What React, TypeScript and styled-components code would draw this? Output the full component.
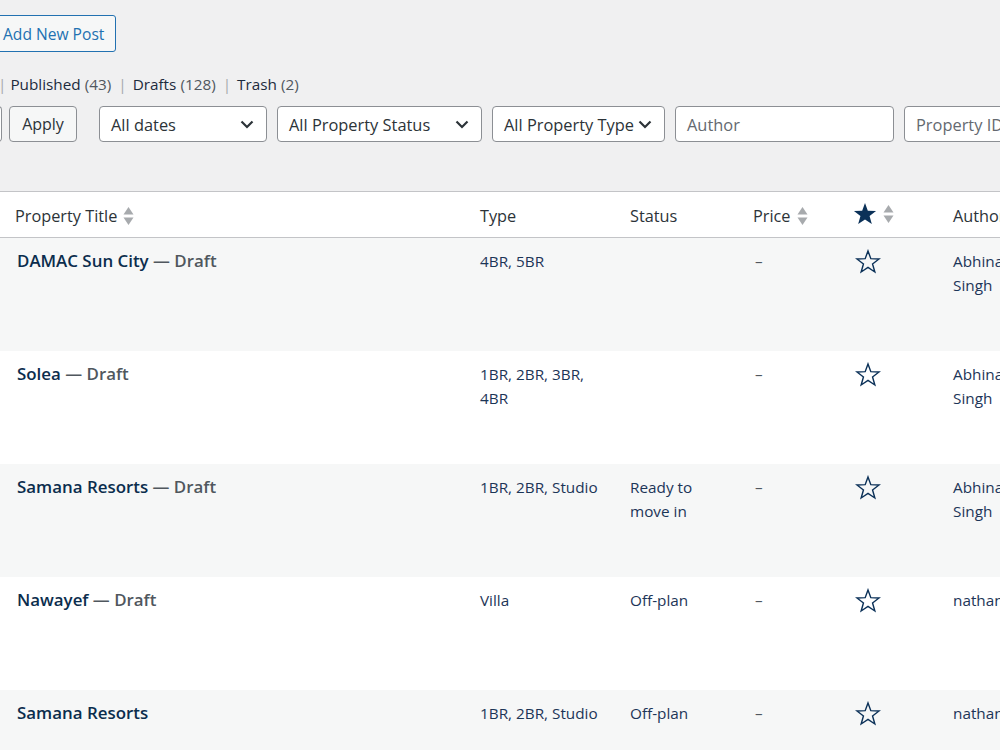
import React from "react";
import styled, { createGlobalStyle } from "styled-components";

const Global = createGlobalStyle`
  html, body { margin: 0; padding: 0; background: #f0f0f1; overflow: hidden; }
  body { font-family: "Open Sans", "Noto Sans", sans-serif; color: #2c3338; }
  * { box-sizing: border-box; }
`;

const Page = styled.div`
  width: 1200px;
  margin-left: -10px;
  padding-top: 15px;
`;

const PrimaryButton = styled.button`
  display: flex;
  align-items: center;
  height: 37px;
  width: 126px;
  padding: 0 0 0 12px;
  border: 1px solid #2271b1;
  border-radius: 3px;
  background: #f6f7f7;
  color: #2271b1;
  font-family: inherit;
  font-size: 15.6px;
  white-space: nowrap;
  cursor: pointer;
`;

const StatusLinks = styled.div`
  display: flex;
  align-items: center;
  height: 24px;
  margin: 20px 0 0 8px;
  font-size: 15.3px;
  line-height: 24px;
  color: #1d2b3d;
  white-space: nowrap;
`;

const Sep = styled.span`
  color: #a7aaad;
  margin: 0 4px 0 0;
`;

const SepAfter = styled(Sep)`
  margin: 0 6px 0 7px;
`;

const Count = styled.span`
  color: #50575e;
  margin-left: 4px;
`;

const FilterBar = styled.div`
  display: flex;
  align-items: center;
  gap: 10px;
  margin-top: 10px;
  height: 36px;
`;

const BulkGroup = styled.div`
  display: flex;
  gap: 7px;
  margin-right: 12px;
`;

const BulkStub = styled.div`
  width: 12px;
  height: 36px;
  border: 1px solid #8c8f94;
  border-left: none;
  border-radius: 0 4px 4px 0;
  background: #fff;
`;

const SecondaryButton = styled.button`
  width: 68px;
  height: 36px;
  border: 1px solid #8c8f94;
  border-radius: 4px;
  background: #f6f7f7;
  color: #2c3338;
  font-family: inherit;
  font-size: 16px;
  padding: 0;
`;

const Select = styled.div<{ $w: number }>`
  width: ${(p) => p.$w}px;
  flex: none;
  height: 36px;
  display: flex;
  align-items: center;
  justify-content: space-between;
  padding: 0 12px 0 11px;
  border: 1px solid #8c8f94;
  border-radius: 4px;
  background: #fff;
  color: #2c3338;
  font-size: 16.4px;
  white-space: nowrap;
`;

const Input = styled.div<{ $w: number }>`
  width: ${(p) => p.$w}px;
  flex: none;
  height: 36px;
  display: flex;
  align-items: center;
  padding: 0 11px;
  border: 1px solid #8c8f94;
  border-radius: 4px;
  background: #fff;
  color: #646970;
  font-size: 16.4px;
  white-space: nowrap;
`;

const Table = styled.table`
  margin-top: 49px;
  width: 1060px;
  table-layout: fixed;
  border-collapse: collapse;
  border-top: 1px solid #c3c4c7;
  background: #fff;
`;

const Th = styled.th<{ $pl?: number }>`
  height: 46px;
  padding: 3px 0 0 ${(p) => p.$pl ?? 12}px;
  text-align: left;
  font-weight: 400;
  font-size: 16.3px;
  color: #2c3338;
  border-bottom: 1px solid #c3c4c7;
  background: #fff;
  white-space: nowrap;
`;

const HeadInner = styled.span<{ $gap?: number }>`
  display: inline-flex;
  align-items: center;
  gap: ${(p) => p.$gap ?? 6}px;
`;

const Row = styled.tr<{ $alt: boolean }>`
  background: ${(p) => (p.$alt ? "#f6f7f7" : "#fff")};
`;

const Td = styled.td<{ $pl?: number }>`
  height: 113px;
  vertical-align: top;
  padding: 11px 12px 0 ${(p) => p.$pl ?? 12}px;
  font-size: 15.3px;
  line-height: 24px;
  color: #1c3557;
`;

const TitleLink = styled.span`
  font-weight: 600;
  font-size: 16.9px;
  color: #0b2d4d;
`;

const PostState = styled.span`
  font-weight: 600;
  font-size: 16.9px;
  color: #50575e;
`;

const Dash = styled.span`
  color: #50575e;
`;

const StarWrap = styled.span`
  display: inline-flex;
`;

const Chevron = () => (
  <svg width="14" height="9" viewBox="0 0 14 9" fill="none">
    <path d="M1.5 1.5 L7 7 L12.5 1.5" stroke="#2c3338" strokeWidth="2.2" />
  </svg>
);

const SortIcon = () => (
  <svg width="11" height="20" viewBox="0 0 11 20">
    <path d="M5.5 1 L10.5 8.5 L0.5 8.5 Z" fill="#a7aaad" />
    <path d="M5.5 19 L10.5 11.5 L0.5 11.5 Z" fill="#a7aaad" />
  </svg>
);

const STAR = "12,1.8 14.6,8.9 22.2,9.2 16.2,13.9 18.3,21.2 12,17 5.7,21.2 7.8,13.9 1.8,9.2 9.4,8.9";

const StarFilled = () => (
  <svg width="26" height="26" viewBox="0 0 24 24">
    <polygon points={STAR} fill="#0b3158" />
  </svg>
);

const StarEmpty = () => (
  <svg width="26" height="26" viewBox="0 0 24 24">
    <polygon points={STAR} fill="none" stroke="#0b3158" strokeWidth="1.3" strokeLinejoin="miter" />
  </svg>
);

type Item = {
  title: string;
  draft: boolean;
  type: string;
  status: string;
  author: string;
};

const rows: Item[] = [
  { title: "DAMAC Sun City", draft: true, type: "4BR, 5BR", status: "", author: "Abhinav Singh" },
  { title: "Solea", draft: true, type: "1BR, 2BR, 3BR, 4BR", status: "", author: "Abhinav Singh" },
  { title: "Samana Resorts", draft: true, type: "1BR, 2BR, Studio", status: "Ready to move in", author: "Abhinav Singh" },
  { title: "Nawayef", draft: true, type: "Villa", status: "Off-plan", author: "nathan" },
  { title: "Samana Resorts", draft: false, type: "1BR, 2BR, Studio", status: "Off-plan", author: "nathan" },
];

export default function App() {
  return (
    <>
      <Global />
      <Page>
        <PrimaryButton>Add New Post</PrimaryButton>
        <StatusLinks>
          <Sep>|</Sep>
          Published<Count>(43)</Count>
          <SepAfter>|</SepAfter>
          Drafts<Count>(128)</Count>
          <SepAfter>|</SepAfter>
          Trash<Count>(2)</Count>
        </StatusLinks>
        <FilterBar>
          <BulkGroup>
            <BulkStub />
            <SecondaryButton>Apply</SecondaryButton>
          </BulkGroup>
          <Select $w={168}>All dates<Chevron /></Select>
          <Select $w={205}>All Property Status<Chevron /></Select>
          <Select $w={173}>All Property Type<Chevron /></Select>
          <Input $w={219}>Author</Input>
          <Input $w={200}>Property ID</Input>
        </FilterBar>
        <Table>
          <colgroup>
            <col style={{ width: 478 }} />
            <col style={{ width: 150 }} />
            <col style={{ width: 123 }} />
            <col style={{ width: 102 }} />
            <col style={{ width: 98 }} />
            <col style={{ width: 109 }} />
          </colgroup>
          <thead>
            <tr>
              <Th $pl={25}><HeadInner>Property Title<SortIcon /></HeadInner></Th>
              <Th>Type</Th>
              <Th>Status</Th>
              <Th><HeadInner>Price<SortIcon /></HeadInner></Th>
              <Th $pl={9}><HeadInner $gap={5}><StarFilled /><SortIcon /></HeadInner></Th>
              <Th>Author</Th>
            </tr>
          </thead>
          <tbody>
            {rows.map((r, i) => (
              <Row key={i} $alt={i % 2 === 0}>
                <Td $pl={27}>
                  <TitleLink>{r.title}</TitleLink>
                  {r.draft && <PostState> — Draft</PostState>}
                </Td>
                <Td>{r.type}</Td>
                <Td>{r.status}</Td>
                <Td $pl={14}><Dash>–</Dash></Td>
                <Td $pl={12}><StarWrap><StarEmpty /></StarWrap></Td>
                <Td>{r.author}</Td>
              </Row>
            ))}
          </tbody>
        </Table>
      </Page>
    </>
  );
}
